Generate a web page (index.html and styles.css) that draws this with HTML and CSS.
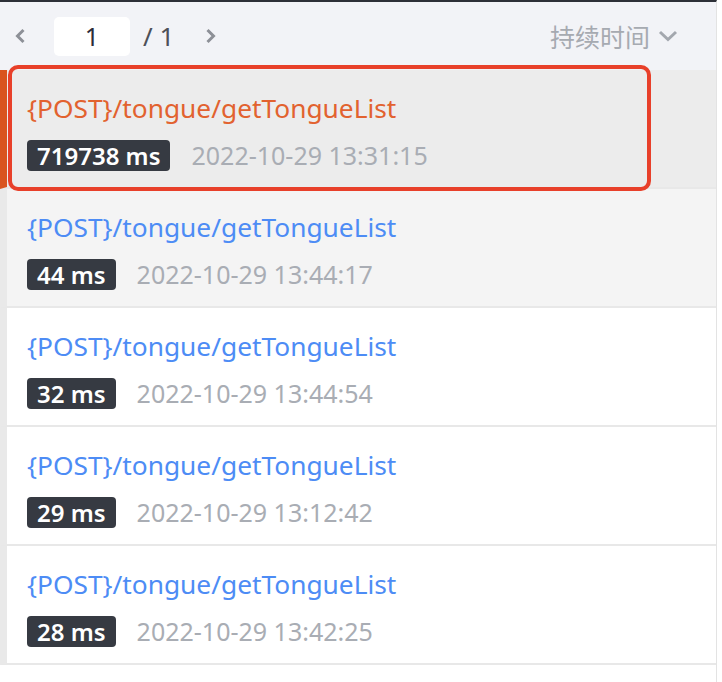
FILE: index.html
```html
<!DOCTYPE html>
<html lang="zh">
<head>
<meta charset="utf-8">
<link rel="stylesheet" href="styles.css">
</head>
<body>
<div class="panel">
  <div class="toolbar">
    <span class="nav prev"><svg width="12" height="16" viewBox="0 0 12 16"><path d="M9.5 2 L3.5 8 L9.5 14" fill="none" stroke="#8d9097" stroke-width="3"/></svg></span>
    <span class="page-input">1</span>
    <span class="page-total">/ 1</span>
    <span class="nav next"><svg width="12" height="16" viewBox="0 0 12 16"><path d="M2.5 2 L8.5 8 L2.5 14" fill="none" stroke="#8d9097" stroke-width="3"/></svg></span>
    <span class="sort">持续时间<svg width="20" height="12" viewBox="0 0 20 12"><path d="M2 2 L10 9.5 L18 2" fill="none" stroke="#a3a7ae" stroke-width="3"/></svg></span>
  </div>
  <div class="list">
    <div class="row selected">
      <div class="title">{POST}/tongue/getTongueList</div>
      <div class="meta"><span class="badge">719738 ms</span><span class="date">2022-10-29 13:31:15</span></div>
    </div>
    <div class="row hover">
      <div class="title">{POST}/tongue/getTongueList</div>
      <div class="meta"><span class="badge">44 ms</span><span class="date">2022-10-29 13:44:17</span></div>
    </div>
    <div class="row">
      <div class="title">{POST}/tongue/getTongueList</div>
      <div class="meta"><span class="badge">32 ms</span><span class="date">2022-10-29 13:44:54</span></div>
    </div>
    <div class="row">
      <div class="title">{POST}/tongue/getTongueList</div>
      <div class="meta"><span class="badge">29 ms</span><span class="date">2022-10-29 13:12:42</span></div>
    </div>
    <div class="row">
      <div class="title">{POST}/tongue/getTongueList</div>
      <div class="meta"><span class="badge">28 ms</span><span class="date">2022-10-29 13:42:25</span></div>
    </div>
    <div class="highlight"></div>
  </div>
</div>
</body>
</html>
```

FILE: styles.css
```css
html, body {
  margin: 0;
  padding: 0;
  background: #ffffff;
}
body {
  font-family: "Noto Sans", "Noto Sans CJK SC", sans-serif;
  height: 682px;
  overflow: hidden;
}
.panel {
  width: 716px;
  border-top: 2px solid #2d3037;
  border-right: 1px solid #e3e3e3;
  min-height: 680px;
}
.toolbar {
  height: 68px;
  background: #f2f3f7;
  display: flex;
  align-items: center;
  padding-left: 14px;
  box-sizing: border-box;
}
.nav {
  display: flex;
  align-items: center;
}
.page-input {
  margin-left: 28px;
  width: 76px;
  height: 39px;
  background: #fff;
  border-radius: 5px;
  display: flex;
  align-items: center;
  justify-content: center;
  font-size: 25px;
  color: #2c2c3a;
}
.page-total {
  margin-left: 13px;
  font-size: 26px;
  color: #4d5058;
  width: 50px;
}
.next {
  margin-left: 12px;
}
.sort {
  margin-left: auto;
  margin-right: 38px;
  display: flex;
  align-items: center;
  gap: 8px;
  font-size: 25px;
  color: #a6aab1;
  font-family: "Noto Sans CJK SC", sans-serif;
}
.list {
  position: relative;
}
.row {
  height: 117px;
  border-left: 7px solid #e9e9e9;
  border-bottom: 2px solid #e8e8e8;
  padding-left: 20px;
  box-sizing: content-box;
  display: flex;
  flex-direction: column;
  justify-content: flex-start;
  background: #ffffff;
}
.row.selected {
  background: #ececec;
  border-left-color: #d9541f;
}
.row.hover {
  background: #f4f4f4;
}
.title {
  margin-top: 20px;
  font-size: 26.3px;
  line-height: 36px;
  color: #4d8cf5;
}
.selected .title {
  color: #e2622f;
}
.meta {
  margin-top: 12px;
  display: flex;
  align-items: center;
}
.badge {
  height: 31px;
  padding: 0 10px;
  background: #363a42;
  color: #ffffff;
  border-radius: 4px;
  font-size: 24px;
  font-weight: 600;
  display: flex;
  align-items: center;
}
.date {
  margin-left: 21px;
  font-size: 25px;
  color: #a9adb4;
}
.highlight {
  position: absolute;
  left: 8px;
  top: -5px;
  width: 643px;
  height: 126px;
  box-sizing: border-box;
  border: 4px solid #e8402a;
  border-radius: 10px;
  pointer-events: none;
}
```
